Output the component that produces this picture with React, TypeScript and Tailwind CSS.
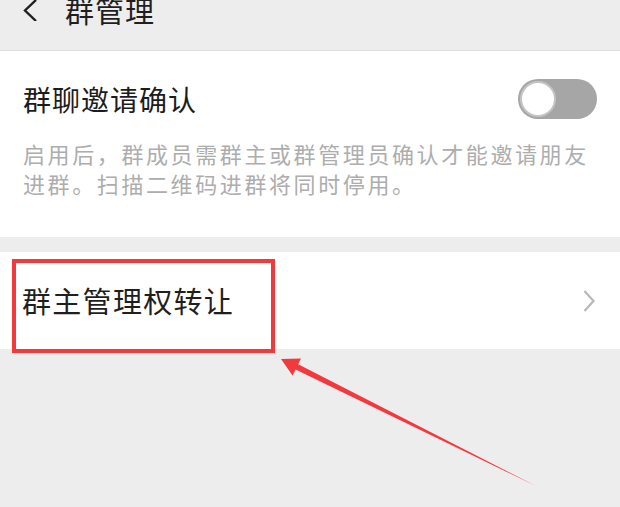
import React from 'react';

const cjk = { fontFamily: '"Noto Sans CJK SC", "Noto Sans", sans-serif' };

function Toggle() {
  return (
    <div className="w-[79px] h-[40px] rounded-full bg-[#a6a6a6] flex items-center px-[2px]">
      <div className="w-[36px] h-[36px] rounded-full bg-white border-[2px] border-[#c4c4c4]" />
    </div>
  );
}

export default function App() {
  return (
    <div className="relative w-[620px] h-[507px] overflow-hidden bg-[#ededed]" style={cjk}>
      {/* header */}
      <div className="h-[53px] border-b border-[#dedede]">
        <div className="flex items-center h-[24px] -mt-[2px]">
          <svg width="16" height="22" viewBox="0 0 16 22" className="ml-[22px]">
            <path d="M14 1 L3 11.5 L14 22" fill="none" stroke="#1f1f1f" strokeWidth="2.4" />
          </svg>
          <span className="ml-[27px] text-[29px] leading-none tracking-[1px] text-[#1f1f1f]">群管理</span>
        </div>
      </div>

      {/* invite confirm */}
      <div className="bg-white pt-[28px] pb-[39px] pl-[23px] pr-[23px]">
        <div className="flex items-center justify-between h-[40px]">
          <span className="text-[28px] leading-none tracking-[1px] text-[#1c1c1c]">群聊邀请确认</span>
          <Toggle />
        </div>
        <p className="mt-[19px] text-[22px] leading-[30px] tracking-[2.6px] text-[#adadad]">
          启用后，群成员需群主或群管理员确认才能邀请朋友
          <br />
          进群。扫描二维码进群将同时停用。
        </p>
      </div>

      {/* transfer row */}
      <div className="relative mt-[15px] bg-white h-[97px] flex items-center justify-between pl-[22px] pr-[25px]">
        <span className="text-[29px] leading-none tracking-[1.3px] text-[#1f1f1f]">群主管理权转让</span>
        <svg width="12" height="22" viewBox="0 0 12 22">
          <path d="M1.5 1 L10.5 11 L1.5 21" fill="none" stroke="#b8b8b8" strokeWidth="2.2" />
        </svg>
        {/* annotation box */}
        <div className="absolute left-[12px] top-[7px] w-[263px] h-[94px] border-[4px] border-[#f03a3e]" />
      </div>

      {/* annotation arrow */}
      <svg className="absolute left-0 top-0 pointer-events-none" width="620" height="507" viewBox="0 0 620 507">
        <polygon
          points="281,359 301,358.5 298.2,364.2 536,486 295.6,369.6 292.5,375.5"
          fill="#f23a3e"
        />
      </svg>
    </div>
  );
}
